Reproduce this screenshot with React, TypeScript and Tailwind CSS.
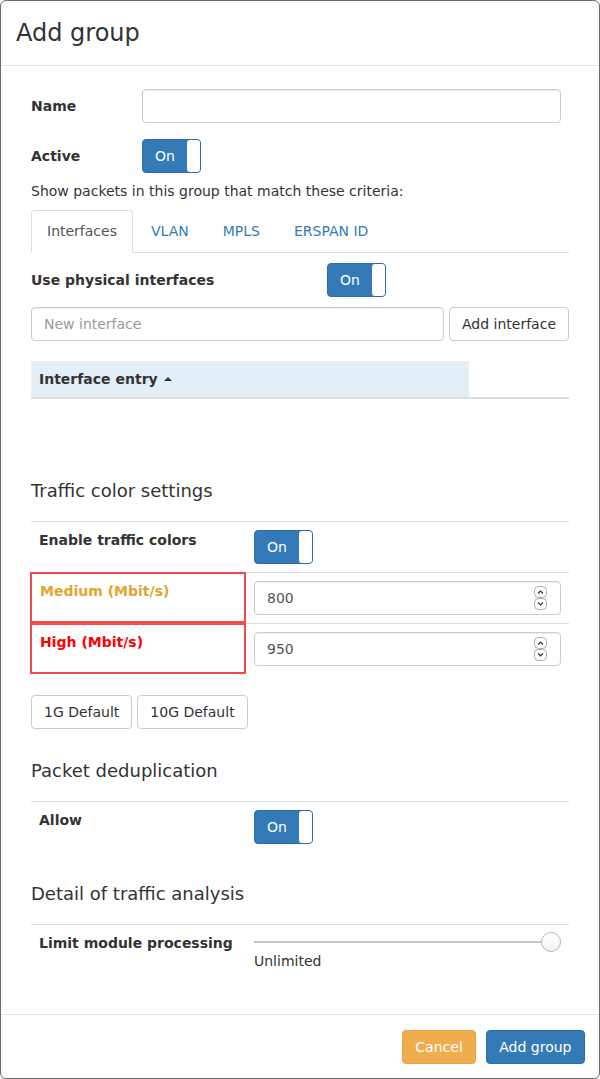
import React from 'react';

function Toggle() {
  return (
    <div className="flex h-[34px] w-[59px] rounded border border-[#2e6da4] bg-[#337ab7]">
      <span className="flex flex-1 items-center justify-center text-sm text-white">On</span>
      <span className="w-[13px] rounded-[3px] bg-white" />
    </div>
  );
}

function Spinner() {
  return (
    <svg width="13" height="24" viewBox="0 0 13 24" className="shrink-0">
      <rect x="0.5" y="0.5" width="12" height="11" rx="4" fill="#fff" stroke="#aaa" />
      <rect x="0.5" y="12.5" width="12" height="11" rx="4" fill="#fff" stroke="#aaa" />
      <path d="M4 7.5 L6.5 5 L9 7.5" fill="none" stroke="#333" strokeWidth="1.2" />
      <path d="M4 16.5 L6.5 19 L9 16.5" fill="none" stroke="#333" strokeWidth="1.2" />
    </svg>
  );
}

function NumberInput({ value }: { value: string }) {
  return (
    <div className="flex h-[34px] w-[307px] items-center rounded border border-[#ccc] bg-white pl-3 pr-[13px] shadow-[inset_0_1px_1px_rgba(0,0,0,0.075)]">
      <span className="flex-1 text-sm text-[#555]">{value}</span>
      <Spinner />
    </div>
  );
}

function SectionTitle({ children, className }: { children: React.ReactNode; className: string }) {
  return <h4 className={`text-lg leading-5 text-[#333] ${className}`}>{children}</h4>;
}

function Btn({ children, className = '' }: { children: React.ReactNode; className?: string }) {
  return (
    <button className={`h-[34px] rounded border text-sm leading-5 ${className}`}>{children}</button>
  );
}

export default function App() {
  return (
    <div
      className="flex h-[1079px] w-[600px] flex-col rounded-md border border-[#6b6b6b] bg-white text-sm text-[#333]"
      style={{ fontFamily: '"DejaVu Sans", "Liberation Sans", sans-serif' }}
    >
      {/* Header */}
      <div className="flex h-[65px] shrink-0 items-center border-b border-[#e5e5e5] px-[15px]">
        <h3 className="text-2xl leading-7 text-[#333]">Add group</h3>
      </div>

      {/* Body */}
      <div className="flex flex-1 flex-col px-[30px] pt-[23px]">
        <div className="flex items-center">
          <label className="w-[111px] font-bold">Name</label>
          <div className="h-[34px] w-[419px] rounded border border-[#ccc] shadow-[inset_0_1px_1px_rgba(0,0,0,0.075)]" />
        </div>

        <div className="mt-4 flex items-center">
          <label className="w-[111px] font-bold">Active</label>
          <Toggle />
        </div>

        <p className="mt-2 leading-5">Show packets in this group that match these criteria:</p>

        {/* Tabs */}
        <div className="mt-[9px] flex border-b border-[#ddd]">
          <div className="-mb-px rounded-t border border-[#ddd] border-b-transparent bg-white px-[15px] py-[10px] leading-5 text-[#555]">
            Interfaces
          </div>
          <div className="ml-[2px] border border-transparent px-[15px] py-[10px] leading-5 text-[#337ab7]">VLAN</div>
          <div className="ml-[2px] border border-transparent px-[15px] py-[10px] leading-5 text-[#337ab7]">MPLS</div>
          <div className="ml-[2px] border border-transparent px-[15px] py-[10px] leading-5 text-[#337ab7]">ERSPAN ID</div>
        </div>

        <div className="mt-[10px] flex items-center">
          <label className="w-[296px] font-bold">Use physical interfaces</label>
          <Toggle />
        </div>

        <div className="mt-[10px] flex gap-[5px]">
          <div className="flex h-[34px] w-[413px] items-center rounded border border-[#ccc] px-3 text-[#999] shadow-[inset_0_1px_1px_rgba(0,0,0,0.075)]">
            New interface
          </div>
          <Btn className="flex-1 border-[#ccc] bg-white px-3 text-[#333]">Add interface</Btn>
        </div>

        {/* Interface table */}
        <div className="mt-5 flex border-b-2 border-[#ddd]">
          <div className="flex w-[438px] items-center bg-[#e3eef7] p-2 font-bold leading-5">
            Interface entry
            <span className="ml-[6px] h-0 w-0 border-x-4 border-b-4 border-x-transparent border-b-[#333]" />
          </div>
        </div>

        {/* Traffic colors */}
        <SectionTitle className="mt-[82px]">Traffic color settings</SectionTitle>
        <div className="mt-5 flex flex-col">
          <div className="flex border-t border-[#ddd]">
            <div className="w-[215px] p-2 font-bold leading-5">Enable traffic colors</div>
            <div className="p-2">
              <Toggle />
            </div>
          </div>
          <div className="flex">
            <div className="-ml-px w-[216px] border-t border-[#ddd] p-2 pl-[10px] font-bold leading-5 text-[#e2a52e] outline-2 -outline-offset-2 outline-[#f24b4f]">
              Medium (Mbit/s)
            </div>
            <div className="flex-1 border-t border-[#ddd] p-2">
              <NumberInput value="800" />
            </div>
          </div>
          <div className="flex">
            <div className="-ml-px w-[216px] border-t border-[#ddd] p-2 pl-[10px] font-bold leading-5 text-[#ff0000] outline-2 -outline-offset-2 outline-[#f24b4f]">
              High (Mbit/s)
            </div>
            <div className="flex-1 border-t border-[#ddd] p-2">
              <NumberInput value="950" />
            </div>
          </div>
        </div>

        <div className="mt-[21px] flex gap-[5px]">
          <Btn className="border-[#ccc] bg-white px-3 text-[#333]">1G Default</Btn>
          <Btn className="border-[#ccc] bg-white px-3 text-[#333]">10G Default</Btn>
        </div>

        {/* Deduplication */}
        <SectionTitle className="mt-[32px]">Packet deduplication</SectionTitle>
        <div className="mt-5 flex border-t border-[#ddd]">
          <div className="w-[215px] p-2 font-bold leading-5">Allow</div>
          <div className="p-2">
            <Toggle />
          </div>
        </div>

        {/* Traffic analysis */}
        <SectionTitle className="mt-[32px]">Detail of traffic analysis</SectionTitle>
        <div className="mt-5 flex border-t border-[#ddd]">
          <div className="w-[215px] p-2 font-bold leading-5">Limit module processing</div>
          <div className="flex-1 p-2">
            <div className="relative h-[18px] w-[307px]">
              <div className="absolute left-0 right-[8px] top-[8px] h-[2px] bg-[#c9c6c1]" />
              <div className="absolute right-0 top-[-1px] h-[20px] w-[20px] rounded-full border border-[#b5b5b5] bg-gradient-to-b from-white to-[#f3f3f3]" />
            </div>
            <div className="leading-5">Unlimited</div>
          </div>
        </div>
      </div>

      {/* Footer */}
      <div className="flex shrink-0 justify-end gap-[10px] border-t border-[#e5e5e5] px-[14px] pb-[14px] pt-[15px]">
        <Btn className="border-[#eea236] bg-[#f0ad4e] px-3 text-white">Cancel</Btn>
        <Btn className="border-[#2e6da4] bg-[#337ab7] px-[12.5px] text-white">Add group</Btn>
      </div>
    </div>
  );
}
